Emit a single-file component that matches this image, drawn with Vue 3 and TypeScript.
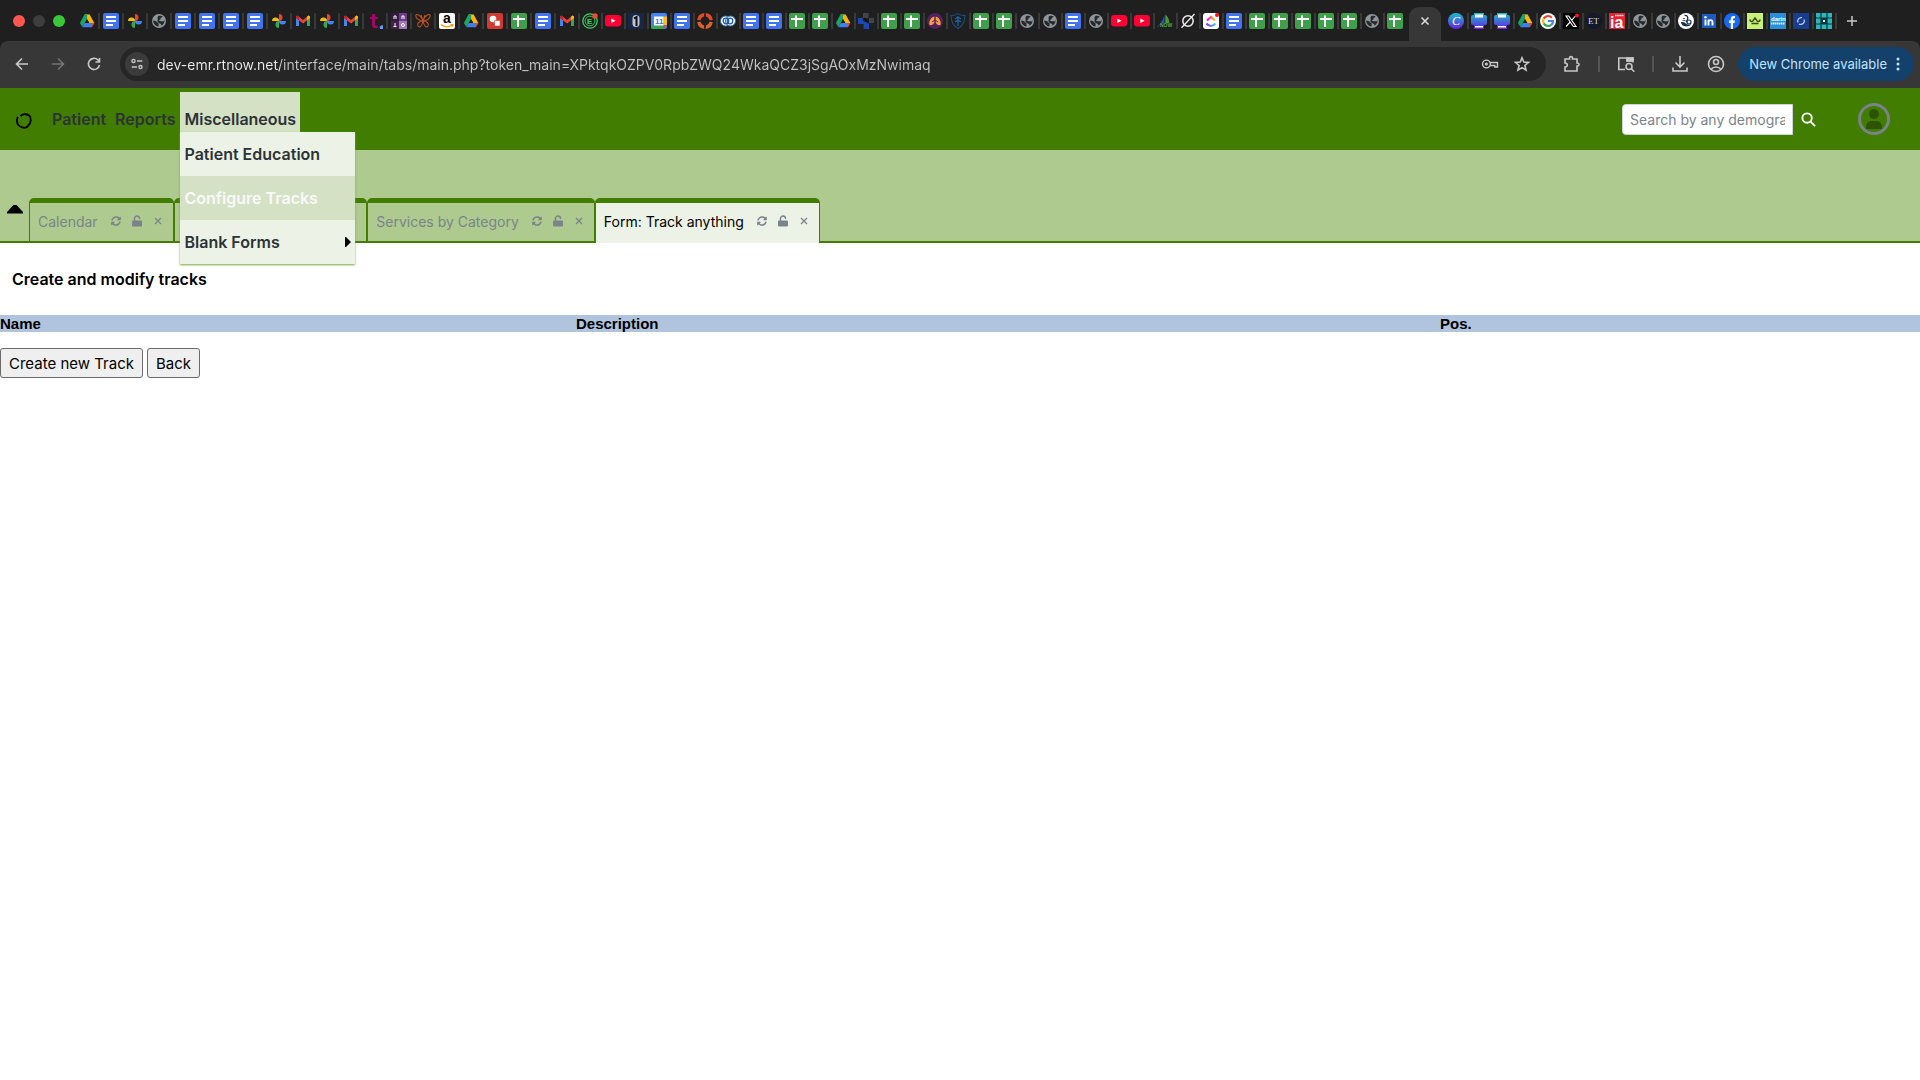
<script setup lang="ts">
import { ref } from 'vue'

interface PageTab {
  title: string
  active: boolean
}

interface Mark {
  text: string
  x: number
  y: number
  size: number
  fill: string
  kind: string
}

const wideTabs: string[] = [
  'drive', 'doc', 'photos', 'globe', 'doc', 'doc', 'doc', 'doc', 'photos', 'gmail', 'photos',
  'gmail', 'tee', 'quad', 'butterfly', 'amazon', 'drive', 'drawing', 'sheet', 'doc', 'gmail',
]

const narrowTabs: string[] = [
  'evernote', 'youtube', 'one', 'calendar', 'doc', 'ring', 'rings', 'doc', 'doc', 'sheet', 'sheet',
  'drive', 'cross', 'sheet', 'sheet', 'lungs', 'shield', 'sheet', 'sheet', 'globe', 'globe', 'doc',
  'globe', 'youtube', 'youtube', 'now', 'slash', 'clickup', 'doc', 'sheet', 'sheet', 'sheet',
  'sheet', 'sheet', 'globe', 'sheet',
]

const trailingTabs: string[] = [
  'canva', 'printer', 'printer', 'drive', 'google', 'xcorp', 'et', 'ia', 'globe', 'globe', 'bird',
  'linkedin', 'facebook', 'crown', 'darin', 'cee', 'grid',
]

// Lettering that sits on top of a favicon's shape
const marks: Record<string, Mark> = {
  amazon: { text: 'a', x: 4, y: 10, size: 14, fill: '#000', kind: 'sans' },
  evernote: { text: 'E', x: 5, y: 11, size: 8, fill: '#35d162', kind: 'sans' },
  calendar: { text: '11', x: 4, y: 11, size: 8, fill: '#3f73e8', kind: 'sans' },
  now: { text: 'NOW', x: 3, y: 14, size: 5, fill: '#5aa84f', kind: 'sans' },
  canva: { text: 'C', x: 4, y: 12, size: 12, fill: '#fff', kind: 'script' },
  et: { text: 'ET', x: 2, y: 11, size: 9, fill: '#d5d7e2', kind: 'serif' },
  ia: { text: 'ia', x: 1, y: 15, size: 16, fill: '#fff', kind: 'sans' },
  darin: { text: 'darin', x: 1, y: 8, size: 6, fill: '#fff', kind: 'sans' },
}

const pageTabs: PageTab[] = [
  { title: 'Calendar', active: false },
  { title: 'Message Center', active: false },
  { title: 'Services by Category', active: false },
  { title: 'Form: Track anything', active: true },
]

const url = ref('dev-emr.rtnow.net/interface/main/tabs/main.php?token_main=XPktqkOZPV0RpbZWQ24WkaQCZ3jSgAOxMzNwimaq')
const search = ref('')
</script>

<template>
  <svg class="sprite" aria-hidden="true">
    <defs>
      <linearGradient id="g-cool" x1="0" y1="0" x2="0" y2="1">
        <stop offset="0" stop-color="#19bfd0" />
        <stop offset="1" stop-color="#6a1fe0" />
      </linearGradient>
      <linearGradient id="g-click" x1="0" y1="0" x2="1" y2="0">
        <stop offset="0" stop-color="#8930fd" />
        <stop offset="1" stop-color="#49ccf9" />
      </linearGradient>
      <linearGradient id="g-click2" x1="0" y1="0" x2="1" y2="0">
        <stop offset="0" stop-color="#ff02f0" />
        <stop offset="1" stop-color="#ffc800" />
      </linearGradient>
    </defs>
    <symbol id="drive" viewBox="0 0 16 16">
      <path d="M5.400 1.500 8 6 3.400 14 .9 10z" fill="#1da462" />
      <path d="M5.400 1.500h5.200L13 6 8 6z" fill="#188038" />
      <path d="M10.600 1.500 15.300 10h-5L5.600 1.500z" fill="#fcb60a" />
      <path d="M5.600 1.500h2.600L8 6 5.800 9.800z" fill="#1da462" />
      <path d="M5.800 10h9.500l-2.500 4.300H3.300z" fill="#3f7df3" />
      <path d="m12.200 10 3.100 0-2.500 4.300z" fill="#e94235" />
      <path d="M8 6.300 10.200 10H5.900z" fill="#1f1f1f" />
    </symbol>
    <symbol id="doc" viewBox="0 0 16 16">
      <rect width="16" height="16" rx="2" fill="#4374f0" />
      <path d="M3 4h10M3 8h10M3 12h7" stroke="#fff" stroke-width="1.800" />
    </symbol>
    <symbol id="sheet" viewBox="0 0 16 16">
      <rect width="16" height="16" rx="2" fill="#3f9f4a" />
      <path d="M2 6h12M7 2.500v11.500" stroke="#fff" stroke-width="2" />
    </symbol>
    <symbol id="photos" viewBox="0 0 16 16">
      <path d="M8 8V1a3.500 3.500 0 0 1 0 7z" fill="#ea4335" />
      <path d="M8 8h7a3.500 3.500 0 0 1-7 0z" fill="#4285f4" />
      <path d="M8 8v7a3.500 3.500 0 0 1 0-7z" fill="#34a853" />
      <path d="M8 8H1a3.500 3.500 0 0 1 7 0z" fill="#fbbc04" />
    </symbol>
    <symbol id="globe" viewBox="0 0 16 16">
      <circle cx="8" cy="8" r="7" fill="#8f959c" />
      <path d="M2.200 7.500c2 .2 3 .4 3.600 1.400.5.900 1.800.5 1.800 1.800v2.800C4.500 13.200 2.200 10.800 2.200 7.500zM7 3.200c1.600-.8 3.400-.6 4.700.2-.4 1-1.200 1.200-2 1.400-.3.900.3 1.300-.6 1.700-1 .3-1.300 1.400-.3 1.600 1.700.2 2.600.3 3.700.5.500-1 .9-1.500.9-1.500.5 2-.8 4.600-2.800 5.600-.2-1.100-.6-2-1.900-2.300C7 9.800 6 8.500 6.600 7 7 5.800 6 5 7 3.200z" fill="#26282b" />
    </symbol>
    <symbol id="gmail" viewBox="0 0 16 16">
      <path d="M1 4v9h3V7z" fill="#4285f4" />
      <path d="M12 7v6h3V4z" fill="#34a853" />
      <path d="M1 3.500 2.500 2.500 8 7l5.500-4.500L15 3.500V5l-7 5.500L1 5z" fill="#ea4335" />
      <path d="M12 3.700 13.500 2.500 15 3.500V5l-3 2.500z" fill="#fbbc04" />
      <path d="M1 5V3.500L2.500 2.500 4 3.700v3.600z" fill="#c5221f" />
    </symbol>
    <symbol id="tee" viewBox="0 0 16 16">
      <path d="M5 1h3v3h3v2H8v5c0 1.500 1 2 3 1.500V15c-4 1-6-.5-6-3V6H3V4h2z" fill="#a3066b" />
      <path d="M16 12.500v3.500h-3a2.500 2.500 0 0 1 3-3.500z" fill="#669df6" />
    </symbol>
    <symbol id="quad" viewBox="0 0 16 16">
      <path d="M0 0h8v8H0z" fill="#35193f" /><path d="M8 0h8v8H8z" fill="#6d3d86" />
      <path d="M0 8h8v8H0z" fill="#41214e" /><path d="M8 8h8v8H8z" fill="#a078b3" />
      <path d="M3 6V3h2v3M11 6V3h2v3M4 10v3M2.500 13.500h3" stroke="#fff" fill="none" />
      <circle cx="12" cy="12" r="1.500" fill="none" stroke="#fff" />
    </symbol>
    <symbol id="butterfly" viewBox="0 0 16 16">
      <path d="M8 8C6 2 1 0 .8 2.500S4 8 8 8C10 2 15 0 15.200 2.500S12 8 8 8zM8 8c-4 0-6.500 3-5 5s4 .5 5-5c1 5.500 3.500 7 5 5s-1-5-5-5zM6 2l2 6 2-6" fill="none" stroke="#bd5423" stroke-width="1.100" />
    </symbol>
    <symbol id="amazon" viewBox="0 0 16 16">
      <rect width="16" height="16" rx="2" fill="#fff" />
      <path d="M2 11.500c3.500 2.800 8 2.800 11.500.5M11.500 11.300l2.300.2-.5 2.200" stroke="#f90" stroke-width="1.300" fill="none" />
    </symbol>
    <symbol id="drawing" viewBox="0 0 16 16">
      <rect width="16" height="16" rx="2" fill="#cf3b32" />
      <circle cx="6" cy="6" r="3.300" fill="#fff" /><path d="M7.500 7.500H13v5.500H7.500z" fill="#fff" stroke="#cf3b32" stroke-width=".6" />
    </symbol>
    <symbol id="evernote" viewBox="0 0 16 16">
      <circle cx="8" cy="8" r="7.200" fill="none" stroke="#35d162" stroke-width="1.300" />
      <circle cx="8" cy="8" r="4.900" fill="none" stroke="#35d162" stroke-width=".9" />
      <circle cx="13" cy="3" r="2.700" fill="#ee4b35" />
    </symbol>
    <symbol id="youtube" viewBox="0 0 16 16">
      <rect y="2" width="16" height="11.500" rx="3" fill="#ff0033" /><path d="M6.300 5.500v4.500L10.500 7.800z" fill="#fff" />
    </symbol>
    <symbol id="one" viewBox="0 0 16 16">
      <path d="M0 0h16v16H0z" fill="#182748" /><rect x="4.500" y="2" width="7" height="12" rx="3.500" fill="#bfc3cc" />
      <path d="M6 5.500 8.500 4v9" fill="none" stroke="#0b0e16" stroke-width="2" />
    </symbol>
    <symbol id="calendar" viewBox="0 0 16 16">
      <rect width="16" height="16" rx="2" fill="#4285f4" /><path d="M12.500 3.500H16V12h-3.500z" fill="#fbbc04" />
      <path d="M3 12.500h9.500V16H2a2 2 0 0 1-2-2v-1.500z" fill="#34a853" /><path d="M12.500 12.500H16L12.500 16z" fill="#ea4335" />
      <path d="M3 3.500h9.500v9H3z" fill="#fff" />
    </symbol>
    <symbol id="ring" viewBox="0 0 16 16">
      <path d="M7.300.1A8 8 0 0 0 .2 7L3.500 7.200A5 5 0 0 1 7 3.400zM8.700.1A8 8 0 0 1 15.800 7L12.500 7.200A5 5 0 0 0 9 3.400z" fill="#dd4b27" />
      <path d="M7.300 15.900A8 8 0 0 1 .2 9L3.500 8.800A5 5 0 0 0 7 12.600zM8.700 15.900A8 8 0 0 0 15.800 9L12.500 8.800A5 5 0 0 1 9 12.600z" fill="#d9622a" />
    </symbol>
    <symbol id="rings" viewBox="0 0 16 16">
      <circle cx="5.500" cy="8" r="5" fill="#fff" stroke="#2d6fb7" stroke-width="1" /><circle cx="10.500" cy="8" r="5" fill="#fff" stroke="#2d6fb7" stroke-width="1" />
      <circle cx="6" cy="8" r="2.800" fill="none" stroke="#1c5ca8" stroke-width="1.300" /><circle cx="10" cy="8" r="2.800" fill="none" stroke="#1c5ca8" stroke-width="1.300" />
    </symbol>
    <symbol id="cross" viewBox="0 0 16 16">
      <path d="M5 0h5.500v5H16v5h-5V5H5z" fill="#414549" /><path d="M0 5h5v2.500L7 9h4v7H5.500v-5H0z" fill="#1e47b5" />
      <path d="m6 5 4.500 5" stroke="#111" stroke-width="1.500" />
    </symbol>
    <symbol id="lungs" viewBox="0 0 16 16">
      <circle cx="8" cy="8" r="8" fill="#542060" />
      <path d="M7.300 3.500v6c-.5 2-3.800 3.300-4.800 2.300C1.500 9 4 4 7.300 3.500zM8.700 3.500v6c.5 2 3.800 3.300 4.800 2.300C14.500 9 12 4 8.700 3.500z" fill="#f9a13a" />
      <path d="M5 9 8 7l3 2" fill="none" stroke="#542060" />
    </symbol>
    <symbol id="shield" viewBox="0 0 16 16">
      <path d="M8 .6c2 1.500 4.500 2 7 2-.2 6-1.500 10-7 12.800C2.500 12.600 1.200 8.600 1 2.600c2.500 0 5-.5 7-2z" fill="none" stroke="#184f83" stroke-width="1.100" />
      <path d="M8 3v10M5 6l3-2 3 2M5 9l3-2 3 2" fill="none" stroke="#1c67a8" stroke-width="1.200" />
    </symbol>
    <symbol id="now" viewBox="0 0 16 16">
      <path d="M7.500 2v8H3.500c2-2 3-5 4-8z" fill="#1e5bb3" /><path d="M8.300 1.500c2.700 2 4 5 4 8.500h-4z" fill="#4b9b28" /><path d="M1 14c.5-2.500 1.500-3 4-3" stroke="#1d4fa0" fill="none" />
    </symbol>
    <symbol id="slash" viewBox="0 0 16 16">
      <circle cx="8" cy="8" r="5.200" fill="none" stroke="#eee" stroke-width="1.500" /><path d="M1.500 14.800 14.500 1" stroke="#eee" stroke-width="1.300" />
    </symbol>
    <symbol id="clickup" viewBox="0 0 16 16">
      <rect width="16" height="16" rx="3" fill="#fff" />
      <path d="M3.500 10.500c2.500 3.300 6.500 3.300 9 0" fill="none" stroke="url(#g-click)" stroke-width="2.200" />
      <path d="m4 7.500 4-3.600 4 3.600" fill="none" stroke="url(#g-click2)" stroke-width="2.200" />
      <circle cx="14" cy="2" r="2" fill="#f11" />
    </symbol>
    <symbol id="canva" viewBox="0 0 16 16">
      <circle cx="8" cy="8" r="8" fill="url(#g-cool)" />
    </symbol>
    <symbol id="printer" viewBox="0 0 16 16">
      <path d="M3 0h10v2h1a2 2 0 0 1 2 2v6a2 2 0 0 1-2 2h-1v4H3v-4H2a2 2 0 0 1-2-2V4a2 2 0 0 1 2-2h1z" fill="url(#g-cool)" />
      <path d="M4 1.500h8v3H4zM4 13h8v1.500H4z" fill="#fff" />
    </symbol>
    <symbol id="google" viewBox="0 0 16 16">
      <circle cx="8" cy="8" r="8" fill="#fff" />
      <g fill="none" stroke-width="2.200"><path d="M11.800 4.700A5 5 0 0 0 3.700 5.600" stroke="#ea4335" /><path d="M3.700 5.600a5 5 0 0 0 0 4.800" stroke="#fbbc05" /><path d="M3.700 10.400a5 5 0 0 0 7.500 1.500" stroke="#34a853" /><path d="M11.200 11.900A5 5 0 0 0 13 8H8" stroke="#4285f4" /></g>
    </symbol>
    <symbol id="xcorp" viewBox="0 0 16 16">
      <path d="M0 0h16v16H0z" /><path d="M3 3h2.700L13 13.500h-2.700zM3 13.500 7.200 9M8.800 7.200 12.500 3" fill="none" stroke="#fff" stroke-width="1.100" /><circle cx="14" cy="2.500" r="2" fill="#f12" />
    </symbol>
    <symbol id="et" viewBox="0 0 16 16">
      <circle cx="8" cy="8" r="8" fill="#15172a" />
    </symbol>
    <symbol id="ia" viewBox="0 0 16 16">
      <path d="M0 0h16v16H0z" fill="#e8222e" /><path d="M6 2.500h9" stroke="#fff" stroke-width="1.500" stroke-dasharray="1.500 .7" />
    </symbol>
    <symbol id="bird" viewBox="0 0 16 16">
      <circle cx="8" cy="8" r="8" fill="#fff" />
      <path d="M6.500 2.500C9 2 10.500 4 9.500 6.500L8 9" fill="none" stroke="#17304f" stroke-width="1.300" />
      <circle cx="11" cy="9" r="2" fill="none" stroke="#17304f" stroke-width="1.200" />
      <path d="M3 9c0 3 3 4.800 6.500 4.300 1.800-.2 3-.8 3.500-2-2.500 1-5 .3-6.500-2z" fill="#17304f" /><path d="M5 5.500h2M4.500 7.500h3" stroke="#3b5f8a" stroke-width="1.200" />
    </symbol>
    <symbol id="linkedin" viewBox="0 0 16 16">
      <path d="M1 1h14v14H1z" fill="#1d5bbd" /><circle cx="4.500" cy="4.300" r="1.200" fill="#fff" /><path d="M4.500 6.500v6M7.500 6.500v6M7.500 9c0-2.500 4-2.500 4 0v3.500" fill="none" stroke="#fff" stroke-width="1.900" />
    </symbol>
    <symbol id="facebook" viewBox="0 0 16 16">
      <circle cx="8" cy="8" r="8" fill="#1768f5" /><path d="M6.800 16v-6H5V7.500h1.800V6c0-2.500 1.300-3.300 4.200-2.900v2.200c-1.600-.1-2 .1-2 1.200v1h2l-.4 2.500H9V16z" fill="#fff" />
    </symbol>
    <symbol id="crown" viewBox="0 0 16 16">
      <path d="M0 0h16v16H0z" fill="#c6f279" /><path d="M2.800 6.500c.5 2 2 2.500 3 1.500L8 5l2.200 3c1 1 2.500.5 3-1.500M4.500 10.500h7" fill="none" stroke="#354816" stroke-width="1.400" />
    </symbol>
    <symbol id="darin" viewBox="0 0 16 16">
      <path d="M0 0h16v16H0z" fill="#2a8fd8" /><path d="M1 10.500h14" stroke="#d8edfa" stroke-width="2" stroke-dasharray="1.500 .5" />
    </symbol>
    <symbol id="cee" viewBox="0 0 16 16">
      <path d="M0 0h16v16H0z" fill="#183d8e" /><path d="M5 9.500A3.500 3.500 0 0 1 9 4.700M11 6.500A3.500 3.500 0 0 1 6 10.900" fill="none" stroke="#bdd0f2" stroke-width="1.200" />
    </symbol>
    <symbol id="grid" viewBox="0 0 16 16">
      <path d="M0 0h16v16H0z" fill="#29b6bd" /><path d="M0 5h16M0 11h16M5 0v16M11 0v16" stroke="#10353a" stroke-width="1.200" /><path d="M5 5h6v6H5z" fill="#10353a" /><path d="M7 7h2v2H7z" fill="#d9fbfb" />
    </symbol>
    <symbol id="refresh" viewBox="0 0 512 512">
      <path d="M370.700 133.300C339.500 104 298.900 88 255.800 88c-77.500.1-144.300 53.200-162.800 126.900-1.300 5.400-6.100 9.200-11.700 9.200H24.100c-7.500 0-13.200-6.800-11.800-14.200C33.900 94.900 134.800 8 256 8c66.400 0 126.800 26.100 171.300 68.700L463 41C478.100 25.900 504 36.600 504 57.900V192c0 13.300-10.700 24-24 24H345.900c-21.400 0-32.100-25.900-17-41l41.800-41.700zM32 296h134.100c21.400 0 32.100 25.900 17 41l-41.800 41.800c31.300 29.300 71.800 45.300 114.900 45.300 77.400-.1 144.300-53.100 162.800-126.800 1.300-5.400 6.100-9.200 11.700-9.200h57.300c7.500 0 13.200 6.800 11.800 14.200C478.100 417.100 377.200 504 256 504c-66.400 0-126.800-26.100-171.300-68.700L49 471c-15.100 15.100-41 4.400-41-16.900V320c0-13.300 10.700-24 24-24z" fill="currentColor" />
    </symbol>
    <symbol id="unlock" viewBox="0 0 12 12">
      <path d="M3.500 6V3.500a2.500 2.500 0 0 1 5 0V4" fill="none" stroke="currentColor" stroke-width="1.400" /><rect x="1" y="5.500" width="10" height="6" rx="1" fill="currentColor" />
    </symbol>
    <symbol id="close" viewBox="0 0 12 12">
      <path d="m3 3 6 6M9 3 3 9" stroke="currentColor" stroke-width="1.300" />
    </symbol>
  </svg>

  <div class="browser">
    <nav class="strip" aria-label="Browser tabs">
      <div class="lights"><i class="red"></i><i class="dim"></i><i class="green"></i></div>
      <button v-for="(icon, i) in wideTabs" :key="'w' + i" class="fav wide" :aria-label="icon">
        <svg viewBox="0 0 16 16">
          <use :href="'#' + icon" />
          <text v-if="marks[icon]" :class="marks[icon].kind" :x="marks[icon].x" :y="marks[icon].y" :font-size="marks[icon].size" :fill="marks[icon].fill">{{ marks[icon].text }}</text>
        </svg>
      </button>
      <button v-for="(icon, i) in narrowTabs" :key="'n' + i" class="fav" :class="{ bare: i === narrowTabs.length - 1 }" :aria-label="icon">
        <svg viewBox="0 0 16 16">
          <use :href="'#' + icon" />
          <text v-if="marks[icon]" :class="marks[icon].kind" :x="marks[icon].x" :y="marks[icon].y" :font-size="marks[icon].size" :fill="marks[icon].fill">{{ marks[icon].text }}</text>
        </svg>
      </button>
      <button class="current" aria-label="Close tab">
        <svg viewBox="0 0 12 12"><path d="m2.500 2.500 7 7M9.500 2.500l-7 7" stroke="#dedede" stroke-width="1.500" /></svg>
      </button>
      <button v-for="(icon, i) in trailingTabs" :key="'t' + i" class="fav" :aria-label="icon">
        <svg viewBox="0 0 16 16">
          <use :href="'#' + icon" />
          <text v-if="marks[icon]" :class="marks[icon].kind" :x="marks[icon].x" :y="marks[icon].y" :font-size="marks[icon].size" :fill="marks[icon].fill">{{ marks[icon].text }}</text>
        </svg>
      </button>
      <button class="new-tab" aria-label="New tab">
        <svg viewBox="0 0 12 12"><path d="M6 1v10M1 6h10" stroke="#c7c7c7" stroke-width="1.500" /></svg>
      </button>
    </nav>

    <div class="toolbar">
      <button class="tool" aria-label="Back"><svg viewBox="0 0 16 16"><path d="M14 8H3M8 2.500 2.500 8 8 13.500" /></svg></button>
      <button class="tool off" aria-label="Forward"><svg viewBox="0 0 16 16"><path d="M2 8h11M8 2.500 13.500 8 8 13.500" /></svg></button>
      <button class="tool" aria-label="Reload"><svg viewBox="0 0 16 16"><path d="M13.500 9A5.600 5.600 0 1 1 12 4l1.500 1.500M13.500 2v4h-4" /></svg></button>
      <div class="omnibox">
        <button class="site" aria-label="Site information">
          <svg viewBox="0 0 16 16"><circle cx="4" cy="4.500" r="1.800" /><path d="M8 4.500h6M2 11.500h6" /><circle cx="12" cy="11.500" r="1.800" /></svg>
        </button>
        <input v-model="url" class="url" aria-label="Address" spellcheck="false" />
        <button class="glyph" aria-label="Passwords">
          <svg viewBox="0 0 20 16"><circle cx="6" cy="8" r="4.300" /><circle cx="6" cy="8" r="1" /><path d="M10 6.300h8.300v5h-3V9.700H10" /></svg>
        </button>
        <button class="glyph" aria-label="Bookmark">
          <svg viewBox="0 0 16 16"><path d="m8 1.800 1.800 4.300 4.700.4-3.600 3 1.100 4.600-4-2.500-4 2.500 1.100-4.600-3.600-3 4.700-.4z" /></svg>
        </button>
      </div>
      <button class="tool ext" aria-label="Extensions"><svg viewBox="0 0 18 18"><path d="M2 4h4.500V3a1.500 1.500 0 0 1 3 0v1H14v4h.5a1.500 1.500 0 0 1 0 3H14v5H2v-4c3 0 3-4 0-4z" /></svg></button>
      <span class="bar"></span>
      <button class="tool mid" aria-label="Search tabs"><svg viewBox="0 0 18 18"><path d="M8 14.500H1.800V3H16v4.500M10 3v3h6" /><path d="M10 3h6v3h-6z" fill="#c7c7c7" /><circle cx="12" cy="11.500" r="3" /><path d="m14.300 13.800 3 3" /></svg></button>
      <span class="bar"></span>
      <button class="tool mid" aria-label="Downloads"><svg viewBox="0 0 18 18"><path d="M9 1v10.500M4.500 7.500 9 12l4.500-4.500M2 12.500V16h14v-3.500" /></svg></button>
      <button class="tool me" aria-label="Profile"><svg viewBox="0 0 18 18"><circle cx="9" cy="9" r="7.500" /><circle cx="9" cy="7" r="2.500" /><path d="M4 14.300c2.500-3 7.500-3 10 0" /></svg></button>
      <button class="update">New Chrome available
        <svg viewBox="0 0 4 16"><circle cx="2" cy="3" r="1.500" /><circle cx="2" cy="8" r="1.500" /><circle cx="2" cy="13" r="1.500" /></svg>
      </button>
    </div>
  </div>

  <header class="header">
    <svg class="logo" viewBox="0 0 16 16">
      <path d="M1.800 3.800C-.2 8.500 1 11.500 4.200 13.600M4.500 3C7 .5 12 .3 14.800 4.500M14.300 5C15.500 8.500 14 11 12 12.500M4.500 13.500c3 2.200 6.500 1.500 8.300-1.500" />
    </svg>
    <nav class="menu">
      <button class="entry">Patient</button>
      <button class="entry">Reports</button>
      <div class="open">
        <button class="entry">Miscellaneous</button>
        <ul class="dropdown">
          <li><button>Patient Education</button></li>
          <li class="hover"><button>Configure Tracks</button></li>
          <li><button>Blank Forms<svg viewBox="0 0 6 10"><path d="M0 0h1l5 5-5 5H0z" /></svg></button></li>
        </ul>
      </div>
    </nav>
    <form class="search" @submit.prevent>
      <input v-model="search" type="text" aria-label="Search by any demographics" placeholder="Search by any demographics" />
      <button aria-label="Search"><svg viewBox="0 0 16 16"><circle cx="6.500" cy="6.500" r="5" /><path d="m10 10 5 5" /></svg></button>
    </form>
    <button class="avatar" aria-label="User"><svg viewBox="0 0 18 20"><circle cx="9" cy="5" r="5" /><path d="M1 20v-2c0-4 3-6 5-6h6c2 0 5 2 5 6v2z" /></svg></button>
  </header>

  <div class="tabs">
    <button class="collapse" aria-label="Collapse menu"><svg viewBox="0 0 16 10"><path d="M0 8 6.500 1h3L16 8v1.500H0z" /></svg></button>
    <div v-for="tab in pageTabs" :key="tab.title" class="tab" :class="{ active: tab.active }">
      <a href="#">{{ tab.title }}</a>
      <button aria-label="Refresh"><svg><use href="#refresh" /></svg></button>
      <button aria-label="Lock"><svg><use href="#unlock" /></svg></button>
      <button aria-label="Close"><svg><use href="#close" /></svg></button>
    </div>
    <div class="rest"></div>
  </div>

  <main>
    <h1>Create and modify tracks</h1>
    <table>
      <thead>
        <tr><th class="name">Name</th><th class="desc">Description</th><th>Pos.</th></tr>
      </thead>
    </table>
    <div class="actions">
      <button>Create new Track</button>
      <button>Back</button>
    </div>
  </main>
</template>

<style>
body {
  margin: 0;
  background: #fff;
}
</style>

<style scoped>
* {
  box-sizing: border-box;
}
button,
input {
  font-family: Inter, sans-serif;
  margin: 0;
  padding: 0;
  border: 0;
  background: none;
}
button {
  display: flex;
  align-items: center;
  justify-content: center;
  flex: none;
}
.sprite {
  position: absolute;
  width: 0;
  height: 0;
}
.browser {
  background: #1f1f1f;
  font-family: Inter, sans-serif;
}
.strip {
  display: flex;
  align-items: center;
  height: 41px;
  overflow: hidden;
}
.lights {
  display: flex;
  gap: 8px;
  width: 76px;
  padding-left: 13px;
  flex: none;
}
.lights i {
  width: 12px;
  height: 12px;
  border-radius: 50%;
}
.red {
  background: #fb564f;
}
.dim {
  background: #3e3e3e;
}
.green {
  background: #3ac838;
}
.fav {
  width: 23px;
  height: 16px;
  justify-content: flex-start;
  padding-left: 2px;
  border-right: 2px solid #393939;
}
.fav.wide {
  width: 24px;
  padding-left: 3px;
}
.fav.bare {
  border-color: transparent;
}
.fav svg {
  width: 16px;
  height: 16px;
  overflow: visible;
}
.sans {
  font-family: "Liberation Sans", sans-serif;
  font-weight: 700;
}
.serif {
  font-family: "Liberation Serif", serif;
}
.script {
  font-family: "Liberation Serif", serif;
  font-style: italic;
}
.current {
  align-self: flex-end;
  width: 32px;
  height: 34px;
  margin: 0 5px 0 1px;
  padding-bottom: 6px;
  border-radius: 10px 10px 0 0;
  background: #373737;
}
.current svg,
.new-tab svg {
  width: 12px;
  height: 12px;
}
.new-tab {
  width: 30px;
}
.toolbar {
  display: flex;
  align-items: center;
  height: 47px;
  padding: 0 6px 1px 8px;
  border-radius: 8px 8px 0 0;
  background: #373737;
}
.tool {
  width: 28px;
  height: 28px;
  margin-right: 8px;
}
.tool svg {
  width: 16px;
  height: 16px;
}
.toolbar svg {
  fill: none;
  stroke: #c7c7c7;
  stroke-width: 1.6;
}
.tool.off svg {
  stroke: #757575;
}
.omnibox {
  display: flex;
  align-items: center;
  flex: 1;
  height: 34px;
  margin-left: 4px;
  padding: 0 12px 0 5px;
  border-radius: 17px;
  background: #262626;
}
.site {
  width: 24px;
  height: 24px;
  border-radius: 50%;
  background: #3b3b3b;
}
.site svg {
  width: 14px;
  height: 14px;
}
.url {
  flex: 1;
  min-width: 0;
  height: 30px;
  margin-left: 8px;
  font-size: 14px;
  color: transparent;
  background: linear-gradient(to right, #ebebeb 123px, #c4c4c4 123px);
  background-clip: text;
}
.glyph {
  width: 24px;
  height: 24px;
  margin-left: 8px;
}
.glyph svg {
  width: 18px;
  height: 16px;
}
.tool.ext {
  margin: 0 12px;
}
.tool.ext svg,
.tool.mid svg,
.tool.me svg {
  width: 18px;
  height: 18px;
}
.bar {
  width: 2px;
  height: 16px;
  background: #555;
}
.tool.mid {
  margin: 0 12px;
}
.tool.me {
  margin: 0 8px 0 -4px;
}
.update {
  gap: 9px;
  height: 34px;
  padding: 0 14px 0 11px;
  border-radius: 17px;
  background: #14416c;
  color: #c2e3fb;
  font-size: 13px;
}
.update svg {
  width: 4px;
  height: 16px;
  fill: #c2e3fb;
  stroke: none;
}
.header {
  display: flex;
  align-items: center;
  height: 62px;
  padding-right: 30px;
  background: #417d00;
}
.logo {
  width: 16px;
  height: 16px;
  margin: 3px 16px 0 16px;
  fill: none;
  stroke: #000;
  stroke-width: 1.8;
}
.menu {
  display: flex;
  align-self: flex-start;
  gap: 1px;
  margin-top: 4px;
  flex: 1;
}
.entry {
  height: 40px;
  padding: 14px 4px 0 4px;
  color: #2c3338;
  font-size: 16px;
  font-weight: 600;
  line-height: 24px;
}
.open {
  position: relative;
}
.open > .entry {
  background: #d5e1c4;
}
.dropdown {
  position: absolute;
  top: 40px;
  left: 0;
  z-index: 2;
  width: 175px;
  margin: 0;
  padding: 0;
  list-style: none;
  background: #ecf2e6;
  box-shadow: 0 1px 2px #77a840;
}
.dropdown button {
  width: 100%;
  height: 44px;
  padding: 0 4px;
  justify-content: space-between;
  color: #2c3338;
  font-size: 16px;
  font-weight: 600;
}
.dropdown .hover {
  background: #d5e1c4;
}
.dropdown .hover button {
  color: #f8f9fa;
}
.dropdown svg {
  width: 6px;
  height: 10px;
}
.search {
  display: flex;
  align-items: center;
}
.search input {
  width: 171px;
  height: 31px;
  padding: 0 7px;
  border: 1px solid #ced4da;
  border-radius: 4px 0 0 4px;
  background: #fff;
  font-size: 14px;
}
.search input::placeholder {
  color: #7b848d;
}
.search button {
  width: 31px;
  height: 31px;
}
.search svg {
  width: 15px;
  height: 15px;
  fill: none;
  stroke: #fff;
  stroke-width: 2;
}
.avatar {
  width: 32px;
  height: 32px;
  margin-left: 34px;
  border: 3px solid #7a828a;
  border-radius: 50%;
}
.avatar svg {
  width: 18px;
  height: 20px;
  fill: #2c5400;
}
.tabs {
  display: flex;
  align-items: flex-end;
  height: 93px;
  background: #aeca8e;
}
.collapse {
  width: 29px;
  height: 45px;
  padding-bottom: 21px;
  border-bottom: 2px solid #417d00;
}
.collapse svg {
  width: 16px;
  height: 10px;
}
.tab {
  display: flex;
  align-items: center;
  height: 45px;
  padding: 0 7px 2px 8px;
  border: 1px solid #417d00;
  border-top-width: 5px;
  border-bottom-width: 2px;
  border-radius: 5px 5px 0 0;
  color: #7b848d;
  font-family: Inter, sans-serif;
  font-size: 14px;
}
.tab a {
  margin-right: 5px;
  color: inherit;
  text-decoration: none;
}
.tab button {
  width: 21px;
  height: 20px;
  padding-left: 6px;
  color: #7b848d;
}
.tab svg {
  width: 12px;
  height: 12px;
}
.tab button:first-of-type svg {
  width: 10px;
  height: 10px;
}
.tab.active {
  border-bottom-width: 0;
  padding-bottom: 4px;
  background: #ecf2e6;
}
.tab.active a {
  color: #000;
}
.rest {
  flex: 1;
  height: 2px;
  background: #417d00;
}
main {
  font-family: Inter, sans-serif;
  color: #000;
}
h1 {
  margin: 0;
  padding: 24px 12px;
  font-size: 16px;
  font-weight: 600;
  line-height: 24px;
}
table {
  width: 100%;
  border-collapse: collapse;
  background: #b0c4de;
}
th {
  padding: 0;
  font-family: "Liberation Sans", sans-serif;
  font-size: 15px;
  line-height: 17px;
  text-align: left;
}
th.name {
  width: 30%;
}
th.desc {
  width: 45%;
}
.actions {
  display: flex;
  gap: 4px;
  margin-top: 16px;
}
.actions button {
  height: 30px;
  padding: 0 8px;
  border: 1px solid #6b6b6b;
  border-radius: 3px;
  background: #efefef;
  color: #000;
  font-size: 15px;
}
</style>
